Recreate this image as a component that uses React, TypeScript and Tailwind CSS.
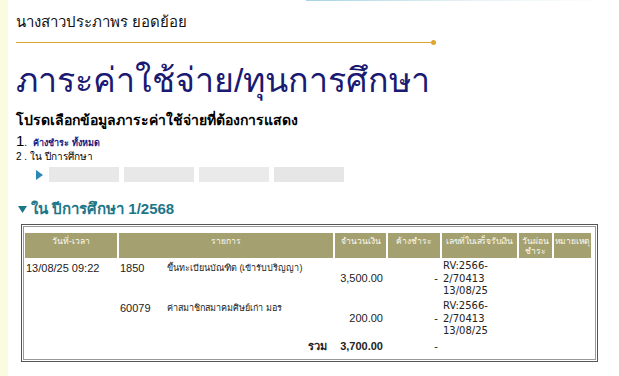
import React from "react";

const cols = "grid-cols-[92px_214px_51px_52px_75px_33px_37px]";

const rows = [
  { date: "13/08/25 09:22", code: "1850", name: "ขึ้นทะเบียนบัณฑิต (เข้ารับปริญญา)", amount: "3,500.00" },
  { date: "", code: "60079", name: "ค่าสมาชิกสมาคมศิษย์เก่า มอร", amount: "200.00" },
];

const Receipt = () => (
  <div className="pl-[1px] font-['DejaVu_Sans',sans-serif] text-[10px] leading-[12.5px] text-[#222]">
    RV:2566-
    <br />
    2/70413
    <br />
    13/08/25
  </div>
);

export default function App() {
  return (
    <div className="flex h-[376px] w-[619px] overflow-hidden bg-white font-['Liberation_Sans',sans-serif] text-black">
      <div className="w-[8px] shrink-0 bg-[#fbfbe2]" />
      <div className="flex flex-1 flex-col pl-[8px]">
        <div className="ml-[290px] h-px w-[300px] bg-gradient-to-r from-[#a6d4e2] via-[#e2f0f4] to-transparent" />

        <div className="mt-[12px] h-[18px] text-[15px] leading-[18px] text-[#111]">นางสาวประภาพร ยอดย้อย</div>

        <div className="mt-[9px] flex h-[5px] w-[420px] items-center">
          <div className="h-px flex-1 bg-[#e0a530]" />
          <div className="h-[5px] w-[5px] rounded-full bg-[#e0a530]" />
        </div>

        <h1 className="mt-[15px] h-[40px] text-[34px] leading-[40px] text-[#1a1a72]">ภาระค่าใช้จ่าย/ทุนการศึกษา</h1>

        <div className="mt-[10px] h-[20px] text-[14px] font-bold leading-[20px]">โปรดเลือกข้อมูลภาระค่าใช้จ่ายที่ต้องการแสดง</div>

        <div className="mt-[2px] flex h-[17px] items-baseline leading-[17px]">
          <span className="text-[15px] font-light">1</span>
          <span className="text-[10px]">.</span>
          <span className="ml-[6px] text-[9px] font-bold text-[#1a1a80]">ค้างชำระ ทั้งหมด</span>
        </div>
        <div className="mt-[2px] h-[12px] text-[10px] leading-[12px]">2 . ใน ปีการศึกษา</div>

        <div className="mt-[4px] flex h-[15px] items-center">
          <svg width="8" height="10" viewBox="0 0 8 10" className="ml-[20px]">
            <polygon points="0,0 7,5 0,10" fill="#2b86b8" />
          </svg>
          <div className="ml-[5px] flex gap-[5px]">
            <div className="h-[15px] w-[70px] bg-[#e8e8e8]" />
            <div className="h-[15px] w-[70px] bg-[#e8e8e8]" />
            <div className="h-[15px] w-[70px] bg-[#eaeaea]" />
            <div className="h-[15px] w-[70px] bg-[#e6e6e6]" />
          </div>
        </div>

        <div className="mt-[16px] flex h-[22px] items-center text-[15px] font-bold leading-[22px] text-[#1d7688]">
          <svg width="9" height="7" viewBox="0 0 9 7" className="ml-[2px] mr-[4px]">
            <polygon points="0,0 9,0 4.5,7" fill="#1d7688" />
          </svg>
          ใน ปีการศึกษา 1/2568
        </div>

        <div className="ml-[5px] mt-[4px] w-[577px] border border-[#555] p-px">
          <div className="border border-[#999] pb-[6px] pl-[1px] pr-[3px] pt-[6px]">
            <div className={`grid ${cols} gap-[2px] text-[8.5px] text-[#fbfbf0]`}>
              {["วันที่-เวลา", "รายการ", "จำนวนเงิน", "ค้างชำระ", "เลขที่ใบเสร็จรับเงิน", "วันผ่อนชำระ", "หมายเหตุ"].map((h) => (
                <div
                  key={h}
                  className={`h-[25px] overflow-hidden bg-[#a5a070] pt-[3px] text-center leading-[10px] ${h === "เลขที่ใบเสร็จรับเงิน" || h === "หมายเหตุ" ? "whitespace-nowrap tracking-[-0.2px]" : ""}`}
                >
                  {h}
                </div>
              ))}
            </div>

            {rows.map((r) => (
              <div key={r.code} className={`grid ${cols} mt-[2px] h-[38px] gap-[2px] text-[11px] leading-[13px] text-[#222]`}>
                <div className="pl-[1px] pt-[2px]">{r.date}</div>
                <div className="flex pt-[2px]">
                  <span className="w-[48px] pl-[1px]">{r.code}</span>
                  <span className="text-[9px]">{r.name}</span>
                </div>
                <div className="pr-[3px] pt-[12px] text-right">{r.amount}</div>
                <div className="pr-[2px] pt-[12px] text-right">-</div>
                <Receipt />
                <div />
                <div />
              </div>
            ))}

            <div className={`grid ${cols} mt-[2px] gap-[2px] text-[11px] font-bold leading-[13px] text-[#222]`}>
              <div />
              <div className="pr-[6px] text-right">รวม</div>
              <div className="pr-[3px] text-right">3,700.00</div>
              <div className="pr-[2px] text-right font-normal">-</div>
              <div />
              <div />
              <div />
            </div>
          </div>
        </div>
      </div>
    </div>
  );
}
